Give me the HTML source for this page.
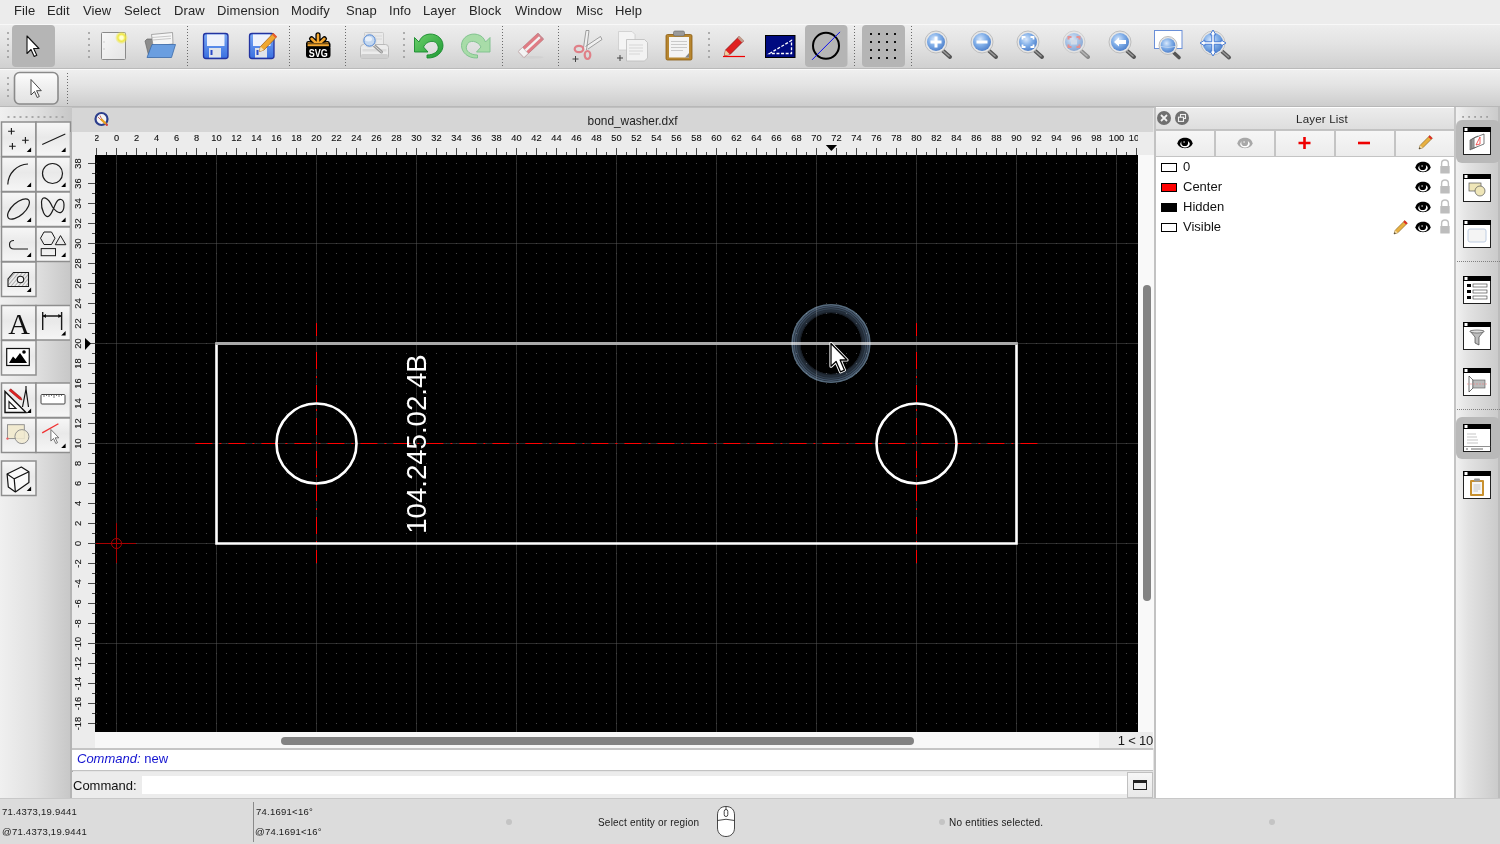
<!DOCTYPE html>
<html><head><meta charset="utf-8">
<style>
*{margin:0;padding:0;box-sizing:border-box}
html,body{width:1500px;height:844px;overflow:hidden;}
body{will-change:transform;background:#ececec;font-family:"Liberation Sans",sans-serif;color:#222}
.a{position:absolute}
#menu{left:0;top:0;width:1500px;height:24px;background:#ececec}
#menu span{position:absolute;top:2.6px;font-size:13px;color:#262626;letter-spacing:0.1px}
#tb1{left:0;top:24px;width:1500px;height:45px;background:linear-gradient(#ededed,#e4e4e4 40%,#d0d0d0);border-top:1px solid #f8f8f8;border-bottom:1px solid #bababa}
#tb2{left:0;top:69px;width:1500px;height:38px;background:linear-gradient(#efefef,#e4e4e4 40%,#cdcdcd);border-top:1px solid #fafafa;border-bottom:1px solid #b8b8b8}
.grip{position:absolute;width:2px;border-left:2px dotted #9a9a9a}
.sep{position:absolute;width:1px;border-left:1px dotted #707070}
.hl{position:absolute;background:#b5b5b5;border-radius:4px}
#leftdock{left:0;top:107px;width:72px;height:691px;background:linear-gradient(90deg,#f0f0f0,#e0e0e0 50%,#c6c6c6)}
.tbtn{position:absolute;width:35px;height:35px;border:1px solid #a3a3a3;background:linear-gradient(#fbfbfb,#ececec 60%,#e2e2e2)}
#doc{left:72px;top:107px;width:1083px;height:691px;background:#e4e4e4;border-left:1px solid #a8a8a8}
#title{left:72px;top:107px;width:1081px;height:25px;background:#d6d6d6}
#hruler{left:72px;top:132px;width:1082px;height:23px;background:#ececec}
#vruler{left:72px;top:155px;width:23px;height:593px;background:#ececec}
#canvas{left:95px;top:155px;width:1043px;height:577px;background:#000;overflow:hidden}
#vscroll{left:1138px;top:155px;width:16px;height:593px;background:#f9f9f9}
#hscroll{left:95px;top:732px;width:1043px;height:16px;background:#f7f7f7}
#status{left:0;top:798px;width:1500px;height:46px;background:#dcdcdc;border-top:1px solid #c8c8c8}
#layer{left:1155px;top:107px;width:300px;height:691px;background:#fff;border-left:1px solid #b8b8b8}
#rightdock{left:1455px;top:107px;width:45px;height:691px;background:linear-gradient(90deg,#f2f2f2,#e2e2e2 30%,#cbcbcb 95.5%,#bcbcbc 96.5%,#bcbcbc)}
</style></head><body>
<div id="menu" class="a">
<span style="left:14px">File</span><span style="left:47px">Edit</span><span style="left:83px">View</span><span style="left:124px">Select</span><span style="left:174px">Draw</span><span style="left:217px">Dimension</span><span style="left:291px">Modify</span><span style="left:346px">Snap</span><span style="left:389px">Info</span><span style="left:423px">Layer</span><span style="left:469px">Block</span><span style="left:515px">Window</span><span style="left:576px">Misc</span><span style="left:615px">Help</span>
</div>
<div id="tb1" class="a"></div>
<div id="tb2" class="a"></div><!--TB--><svg class="a" style="left:0;top:0" width="1300" height="107" viewBox="0 0 1300 107"><rect x="12" y="25" width="43" height="42" rx="4" fill="#b5b5b5"/><rect x="805" y="25" width="42.5" height="42" rx="4" fill="#b5b5b5"/><rect x="862" y="25" width="43" height="42" rx="4" fill="#b5b5b5"/><rect x="7.2" y="32.2" width="1.6" height="1.6" fill="#8c8c8c"/><rect x="7.2" y="38.2" width="1.6" height="1.6" fill="#8c8c8c"/><rect x="7.2" y="44.2" width="1.6" height="1.6" fill="#8c8c8c"/><rect x="7.2" y="50.2" width="1.6" height="1.6" fill="#8c8c8c"/><rect x="7.2" y="56.2" width="1.6" height="1.6" fill="#8c8c8c"/><rect x="88.2" y="32.2" width="1.6" height="1.6" fill="#8c8c8c"/><rect x="88.2" y="38.2" width="1.6" height="1.6" fill="#8c8c8c"/><rect x="88.2" y="44.2" width="1.6" height="1.6" fill="#8c8c8c"/><rect x="88.2" y="50.2" width="1.6" height="1.6" fill="#8c8c8c"/><rect x="88.2" y="56.2" width="1.6" height="1.6" fill="#8c8c8c"/><rect x="403.2" y="32.2" width="1.6" height="1.6" fill="#8c8c8c"/><rect x="403.2" y="38.2" width="1.6" height="1.6" fill="#8c8c8c"/><rect x="403.2" y="44.2" width="1.6" height="1.6" fill="#8c8c8c"/><rect x="403.2" y="50.2" width="1.6" height="1.6" fill="#8c8c8c"/><rect x="403.2" y="56.2" width="1.6" height="1.6" fill="#8c8c8c"/><rect x="708.2" y="32.2" width="1.6" height="1.6" fill="#8c8c8c"/><rect x="708.2" y="38.2" width="1.6" height="1.6" fill="#8c8c8c"/><rect x="708.2" y="44.2" width="1.6" height="1.6" fill="#8c8c8c"/><rect x="708.2" y="50.2" width="1.6" height="1.6" fill="#8c8c8c"/><rect x="708.2" y="56.2" width="1.6" height="1.6" fill="#8c8c8c"/><path d="M187.5 26V66" stroke="#6a6a6a" stroke-width="1" stroke-dasharray="1 2"/><path d="M289.5 26V66" stroke="#6a6a6a" stroke-width="1" stroke-dasharray="1 2"/><path d="M345.5 26V66" stroke="#6a6a6a" stroke-width="1" stroke-dasharray="1 2"/><path d="M502.5 26V66" stroke="#6a6a6a" stroke-width="1" stroke-dasharray="1 2"/><path d="M558.5 26V66" stroke="#6a6a6a" stroke-width="1" stroke-dasharray="1 2"/><path d="M854.5 26V66" stroke="#6a6a6a" stroke-width="1" stroke-dasharray="1 2"/><path d="M911.5 26V66" stroke="#6a6a6a" stroke-width="1" stroke-dasharray="1 2"/><path d="M27 36V53.5L31 49.5L34.2 56.5L36.8 55.3L33.6 48.5H39Z" fill="#fff" stroke="#111" stroke-width="1.1" stroke-linejoin="round"/><defs><radialGradient id="glow"><stop offset="0.25" stop-color="#ffffd0"/><stop offset="0.55" stop-color="#f0e840"/><stop offset="1" stop-color="#f0e840" stop-opacity="0"/></radialGradient><linearGradient id="page" x1="0" y1="0" x2="1" y2="1"><stop offset="0" stop-color="#f8f8f8"/><stop offset="1" stop-color="#e4e4e4"/></linearGradient><linearGradient id="flop" x1="0" y1="0" x2="0" y2="1"><stop offset="0" stop-color="#7aa8f4"/><stop offset="1" stop-color="#3a70e0"/></linearGradient><radialGradient id="mag" cx="0.4" cy="0.35" r="0.7"><stop offset="0" stop-color="#d8e8fc"/><stop offset="0.5" stop-color="#80aee8"/><stop offset="1" stop-color="#4a7cc8"/></radialGradient><linearGradient id="tbgrad" x1="0" y1="0" x2="0" y2="1"><stop offset="0" stop-color="#fdfdfd"/><stop offset="0.5" stop-color="#eeeeee"/><stop offset="1" stop-color="#e2e2e2"/></linearGradient></defs><rect x="101.5" y="32.5" width="24" height="27" rx="1" fill="url(#page)" stroke="#8a8a8a" stroke-width="1"/><path d="M103.5 42H104.5M103.5 49H104.5" stroke="#aaa"/><circle cx="121.5" cy="37.7" r="6.5" fill="url(#glow)"/><path d="M145 41L147 39H156L157 41H163V56L149 57Z" fill="#8c8c8c" stroke="#666" stroke-width="0.7"/><path d="M151.5 34.5L172.5 32.5L173 44L153 46Z" fill="#f6f6f6" stroke="#888" stroke-width="0.7"/><path d="M152 37.5L171 36M152.5 40L171 38.5" stroke="#bbb" stroke-width="0.8"/><path d="M152 44.5H175.5L171.5 57.5H147Z" fill="#6a9ee0" stroke="#3a6aa8" stroke-width="0.8"/><rect x="203.5" y="33.5" width="24.5" height="25" rx="2.5" fill="url(#flop)" stroke="#2233a0" stroke-width="1.3"/><rect x="207" y="34.5" width="17.5" height="11.5" fill="#eef2fc"/><rect x="209" y="48" width="12" height="9.5" fill="#dfe3ea"/><rect x="210.5" y="50" width="2" height="5" fill="#2a4ac8"/><rect x="249.5" y="33.5" width="24.5" height="25" rx="2.5" fill="url(#flop)" stroke="#2233a0" stroke-width="1.3"/><rect x="253" y="34.5" width="17.5" height="11.5" fill="#eef2fc"/><rect x="255" y="48" width="12" height="9.5" fill="#dfe3ea"/><rect x="256.5" y="50" width="2" height="5" fill="#2a4ac8"/><path d="M259.5 51.5L260.5 46.5L273 33.5L276.5 37L264 50Z" fill="#f0a830" stroke="#a05a10" stroke-width="0.7"/><path d="M272 34.5L275.5 38L277 36.5L273.5 33Z" fill="#e85a30"/><path d="M259.5 51.5L260.5 46.5L264 50Z" fill="#f6e0b0"/><g stroke-linecap="round"><path d="M318 45L318 34.8M318 45L311.6 38.8M318 45L324.4 38.8M318 45L308.6 43.6M318 45L327.4 43.6" stroke="#000" stroke-width="5.2"/><path d="M318 45L318 34.8M318 45L311.6 38.8M318 45L324.4 38.8M318 45L308.6 43.6M318 45L327.4 43.6" stroke="#f6a830" stroke-width="2.6"/></g><rect x="306" y="45.5" width="24.5" height="12.6" rx="3" fill="#000"/><rect x="306" y="43.5" width="24.5" height="3.6" fill="#000"/><rect x="307.6" y="44.2" width="21.3" height="2" fill="#f6a830"/><text x="318.2" y="56.6" font-family="Liberation Sans" font-weight="bold" font-size="11.5" fill="#fff" text-anchor="middle" textLength="19" lengthAdjust="spacingAndGlyphs">SVG</text><rect x="364.5" y="32.5" width="19" height="14" rx="1" fill="#eaeaea" stroke="#c4c4c4" stroke-width="0.8"/><path d="M366 36H382M366 39H382" stroke="#d4d4d4" stroke-width="0.8"/><path d="M360.5 47.5Q360.5 44.5 363.5 44.5H385.5Q388.5 44.5 388.5 47.5V56Q388.5 58.5 386 58.5H363Q360.5 58.5 360.5 56Z" fill="#ececec" stroke="#b4b4b4" stroke-width="0.9"/><rect x="361" y="54" width="27" height="4.5" rx="1.5" fill="#cfcfcf"/><rect x="362.5" y="49" width="24" height="2.5" fill="#dcdcdc"/><path d="M373.5 45L381.5 52" stroke="#9a9a9a" stroke-width="3" stroke-linecap="round"/><path d="M373.5 45L381.5 52" stroke="#d8d8d8" stroke-width="1" stroke-linecap="round"/><circle cx="369.5" cy="40.5" r="6.8" fill="#f4f4f4" stroke="#d0d0d0" stroke-width="0.6"/><circle cx="369.5" cy="40.5" r="5.7" fill="#c4d8f0" stroke="#4a80d0" stroke-width="1"/><ellipse cx="368.5" cy="39" rx="3.5" ry="2.5" fill="#e8f0fa"/><defs><linearGradient id="ug" x1="0" y1="0" x2="1" y2="1"><stop offset="0" stop-color="#6cd06a"/><stop offset="1" stop-color="#1e9a34"/></linearGradient></defs><path d="M414.5 37.5 V52 H428 L423.5 47 C426 41 436 38.5 438 46 C439.5 51 434 55 427 55 L427 58 C437 58.5 443 52 443 45.5 C443 37 434 32.5 427 34.5 C423 35.5 420.5 38 419 42 Z" fill="url(#ug)" stroke="#178a2c" stroke-width="0.9" stroke-linejoin="round"/><path d="M 490 37.5 V 52 H 476.5 L 481 47 C 478.5 41 468.5 38.5 466.5 46 C 465 51 470.5 55 477.5 55 L 477.5 58 C 467.5 58.5 461.5 52 461.5 45.5 C 461.5 37 470.5 32.5 477.5 34.5 C 481.5 35.5 484 38 485.5 42 Z" fill="#a8dca8" stroke="#7cc08a" stroke-width="0.9" stroke-linejoin="round"/><ellipse cx="532" cy="57.3" rx="11.5" ry="1.4" fill="#d0d0d0" opacity="0.8"/><g transform="translate(531 45.3) rotate(-43)"><rect x="-13.5" y="-4.2" width="27" height="8.4" rx="1" fill="#e07c84" stroke="#b86a70" stroke-width="0.6"/><rect x="-8" y="-1.2" width="21.5" height="2.4" fill="#f2f2f2"/><rect x="-13.5" y="-4.2" width="5.8" height="8.4" fill="#f4f4f4" stroke="#b8b8b8" stroke-width="0.6"/><rect x="12" y="-4.2" width="1.5" height="8.4" fill="#c88890"/></g><path d="M583.5 48L586 30.5L589 30.5L586.5 50M585.5 46.5L600.5 36.5L602 39.5L588 49" fill="#f0f0f0" stroke="#8a8a8a" stroke-width="0.8"/><ellipse cx="579" cy="49" rx="4.3" ry="3.2" fill="none" stroke="#e08088" stroke-width="2.2"/><ellipse cx="587.5" cy="55" rx="2.8" ry="4" fill="none" stroke="#e08088" stroke-width="2.2"/><path d="M572.5 59H578.5M575.5 56V62" stroke="#444" stroke-width="1"/><path d="M618.5 50V31.5H632L635 34.5V50Z" fill="#f4f4f4" stroke="#ccc" stroke-width="0.8"/><path d="M626.5 61V39.5H644.5L647.5 42.5V58L644.5 61Z" fill="#f2f2f2" stroke="#bbb" stroke-width="0.8"/><path d="M629 45H643M629 48H643M629 51H643M629 54H640" stroke="#ccc" stroke-width="0.7"/><path d="M617 58H623M620 55V61" stroke="#444" stroke-width="1"/><rect x="666" y="34.5" width="26" height="25.5" rx="1.5" fill="#b78630" stroke="#8a5a10" stroke-width="0.8"/><rect x="669" y="37" width="20" height="20.5" fill="#f4f4f4"/><rect x="673.5" y="31" width="11" height="5" rx="1.5" fill="#9a9a9a" stroke="#666" stroke-width="0.6"/><path d="M671 41.5H687M671 44.5H687M671 47.5H687M671 50.5H683" stroke="#b8b8b8" stroke-width="0.7"/><path d="M689 53L685 57.5H689Z" fill="#888"/><path d="M724.5 55.5L725.5 50L739 36.5L743.5 41L730 54.5Z" fill="#e02020" stroke="#801010" stroke-width="0.7"/><path d="M737.5 38L742 42.5L744 40.5L739.5 36Z" fill="#c0a090"/><path d="M724.5 55.5L725.5 50L730 54.5Z" fill="#f0d0a0"/><path d="M723 56.5H745" stroke="#f00000" stroke-width="1.2"/><rect x="765.5" y="35.5" width="29.5" height="22" fill="#000a80" stroke="#000" stroke-width="1"/><path d="M769.5 53.5L791.5 40.5V53.5Z" fill="none" stroke="#fff" stroke-width="1.3" stroke-dasharray="3 1.6"/><circle cx="826" cy="45.85" r="13" fill="none" stroke="#000" stroke-width="2"/><path d="M812.1 59.8L840 31.9" stroke="#1010f0" stroke-width="1"/><rect x="870" y="33" width="2" height="2" fill="#111"/><rect x="870" y="41" width="2" height="2" fill="#111"/><rect x="870" y="49" width="2" height="2" fill="#111"/><rect x="870" y="57" width="2" height="2" fill="#111"/><rect x="878" y="33" width="2" height="2" fill="#111"/><rect x="878" y="41" width="2" height="2" fill="#111"/><rect x="878" y="49" width="2" height="2" fill="#111"/><rect x="878" y="57" width="2" height="2" fill="#111"/><rect x="886" y="33" width="2" height="2" fill="#111"/><rect x="886" y="41" width="2" height="2" fill="#111"/><rect x="886" y="49" width="2" height="2" fill="#111"/><rect x="886" y="57" width="2" height="2" fill="#111"/><rect x="894" y="33" width="2" height="2" fill="#111"/><rect x="894" y="41" width="2" height="2" fill="#111"/><rect x="894" y="49" width="2" height="2" fill="#111"/><rect x="894" y="57" width="2" height="2" fill="#111"/><g><path d="M941 49L950 57" stroke="#555" stroke-width="4" stroke-linecap="round"/><path d="M942 50L949 56" stroke="#9a9a9a" stroke-width="1.6" stroke-linecap="round"/><circle cx="936" cy="42" r="11" fill="#e6e6e6" stroke="#bdbdbd" stroke-width="1"/><circle cx="936" cy="42" r="9" fill="url(#mag)"/><path d="M936 36.5V47.5M930.5 42H941.5" stroke="#fff" stroke-width="3"/></g><g><path d="M987 49L996 57" stroke="#555" stroke-width="4" stroke-linecap="round"/><path d="M988 50L995 56" stroke="#9a9a9a" stroke-width="1.6" stroke-linecap="round"/><circle cx="982" cy="42" r="11" fill="#e6e6e6" stroke="#bdbdbd" stroke-width="1"/><circle cx="982" cy="42" r="9" fill="url(#mag)"/><path d="M976.5 42H987.5" stroke="#fff" stroke-width="3"/></g><g><path d="M1033 49L1042 57" stroke="#555" stroke-width="4" stroke-linecap="round"/><path d="M1034 50L1041 56" stroke="#9a9a9a" stroke-width="1.6" stroke-linecap="round"/><circle cx="1028" cy="42" r="11" fill="#e6e6e6" stroke="#bdbdbd" stroke-width="1"/><circle cx="1028" cy="42" r="9" fill="url(#mag)"/><path d="M1022.5 39.5V37H1025.5M1030.5 37H1033.5V39.5M1033.5 44.5V47H1030.5M1025.5 47H1022.5V44.5" stroke="#fff" stroke-width="1.8" fill="none"/></g><g opacity="0.6"><path d="M1079 49L1088 57" stroke="#555" stroke-width="4" stroke-linecap="round"/><path d="M1080 50L1087 56" stroke="#9a9a9a" stroke-width="1.6" stroke-linecap="round"/><circle cx="1074" cy="42" r="11" fill="#e6e6e6" stroke="#bdbdbd" stroke-width="1"/><circle cx="1074" cy="42" r="9" fill="url(#mag)"/><path d="M1068.5 39.5V37H1071.5M1076.5 37H1079.5V39.5M1079.5 44.5V47H1076.5M1071.5 47H1068.5V44.5" stroke="#e85a5a" stroke-width="2" fill="none"/><rect x="1071" y="39.5" width="6" height="5" fill="#c8d6ec"/></g><g><path d="M1125 49L1134 57" stroke="#555" stroke-width="4" stroke-linecap="round"/><path d="M1126 50L1133 56" stroke="#9a9a9a" stroke-width="1.6" stroke-linecap="round"/><circle cx="1120" cy="42" r="11" fill="#e6e6e6" stroke="#bdbdbd" stroke-width="1"/><circle cx="1120" cy="42" r="9" fill="url(#mag)"/><path d="M1114 42L1119 37.5V40H1126V44H1119V46.5Z" fill="#fff"/></g><rect x="1154.5" y="30.5" width="27.5" height="18" fill="#fff" stroke="#6a8fd8" stroke-width="1"/><path d="M1172 51L1179 57.5" stroke="#555" stroke-width="3.6" stroke-linecap="round"/><circle cx="1168" cy="45.5" r="9" fill="#e6e6e6" stroke="#bdbdbd" stroke-width="1"/><circle cx="1168" cy="45.5" r="7.3" fill="url(#mag)"/><path d="M1161 46.5Q1168 48.5 1175 46.5" stroke="#b8d0f0" stroke-width="1" fill="none"/><path d="M1221 50.5L1229 57.5" stroke="#5a5a5a" stroke-width="4" stroke-linecap="round"/><path d="M1222 51.2L1228.5 57" stroke="#9a9a9a" stroke-width="1.2" stroke-linecap="round"/><circle cx="1213" cy="43" r="12" fill="#e6e6e6" stroke="#c4c4c4"/><circle cx="1213" cy="43" r="10.3" fill="url(#mag)"/><path d="M1213 30L1215.9 34.8L1214.25 34.8L1214.25 41.75L1221.2 41.75L1221.2 40.1L1226 43L1221.2 45.9L1221.2 44.25L1214.25 44.25L1214.25 51.2L1215.9 51.2L1213 56L1210.1 51.2L1211.75 51.2L1211.75 44.25L1204.8 44.25L1204.8 45.9L1200 43L1204.8 40.1L1204.8 41.75L1211.75 41.75L1211.75 34.8L1210.1 34.8Z" fill="#fff" stroke="#3a70d0" stroke-width="0.9" stroke-linejoin="round"/><rect x="7.2" y="77.2" width="1.6" height="1.6" fill="#8c8c8c"/><rect x="7.2" y="83.2" width="1.6" height="1.6" fill="#8c8c8c"/><rect x="7.2" y="89.2" width="1.6" height="1.6" fill="#8c8c8c"/><rect x="7.2" y="95.2" width="1.6" height="1.6" fill="#8c8c8c"/><rect x="14.5" y="72.5" width="43.5" height="31.5" rx="5" fill="url(#tbgrad)" stroke="#8a8a8a" stroke-width="1.6"/><path d="M31 79.5V95L34.5 91.5L37.2 97.5L39.3 96.5L36.6 90.7H41.3Z" fill="#fff" stroke="#333" stroke-width="0.9" stroke-linejoin="round"/><path d="M67.5 73V104" stroke="#6a6a6a" stroke-width="1" stroke-dasharray="1 2"/></svg><!--/TB-->
<div id="leftdock" class="a"></div><!--LEFT--><svg class="a" style="left:0;top:107px" width="72" height="400" viewBox="0 107 72 400"><defs><linearGradient id="bg" x1="0" y1="0" x2="0" y2="1"><stop offset="0" stop-color="#f7f7f7"/><stop offset="0.45" stop-color="#e9e9e9"/><stop offset="1" stop-color="#f6f6f6"/></linearGradient></defs>
<g fill="#a8a8a8"><rect x="7.5" y="116" width="2" height="2"/><rect x="13.5" y="116" width="2" height="2"/><rect x="19.5" y="116" width="2" height="2"/><rect x="25.5" y="116" width="2" height="2"/><rect x="31.5" y="116" width="2" height="2"/><rect x="37.5" y="116" width="2" height="2"/><rect x="43.5" y="116" width="2" height="2"/><rect x="49.5" y="116" width="2" height="2"/><rect x="55.5" y="116" width="2" height="2"/><rect x="61.5" y="116" width="2" height="2"/></g><rect x="1.5" y="122" width="34.5" height="34.5" fill="url(#bg)" stroke="#8e8e8e" stroke-width="1.5"/><g transform="translate(1.5 122)"><path d="M6.6 9.2H13.2M9.9 5.9V12.5M20.6 18.3H27.2M23.9 15V21.6M7.6 24.2H14.2M10.9 20.9V27.5" stroke="#1a1a1a" fill="none" stroke-width="1.1"/></g><path d="M26.7 151.9H31.1V147.5Z" fill="#000"/><rect x="36" y="122" width="34.5" height="34.5" fill="url(#bg)" stroke="#8e8e8e" stroke-width="1.5"/><g transform="translate(36 122)"><path d="M6.2 22.5L29.3 12.1" stroke="#1a1a1a" fill="none" stroke-width="1.1"/></g><path d="M61.2 151.9H65.6V147.5Z" fill="#000"/><rect x="1.5" y="157" width="34.5" height="34.5" fill="url(#bg)" stroke="#8e8e8e" stroke-width="1.5"/><g transform="translate(1.5 157)"><path d="M6.3 27.5A21 21 0 0 1 26.5 7" stroke="#1a1a1a" fill="none" stroke-width="1.2"/></g><path d="M26.7 186.9H31.1V182.5Z" fill="#000"/><rect x="36" y="157" width="34.5" height="34.5" fill="url(#bg)" stroke="#8e8e8e" stroke-width="1.5"/><g transform="translate(36 157)"><circle cx="16.5" cy="16.5" r="10" stroke="#1a1a1a" fill="none" stroke-width="1.2"/></g><path d="M61.2 186.9H65.6V182.5Z" fill="#000"/><rect x="1.5" y="192" width="34.5" height="34.5" fill="url(#bg)" stroke="#8e8e8e" stroke-width="1.5"/><g transform="translate(1.5 192)"><ellipse cx="17" cy="17" rx="13.5" ry="6.3" transform="rotate(-42 17 17)" stroke="#1a1a1a" fill="none" stroke-width="1.2"/></g><path d="M26.7 221.9H31.1V217.5Z" fill="#000"/><rect x="36" y="192" width="34.5" height="34.5" fill="url(#bg)" stroke="#8e8e8e" stroke-width="1.5"/><g transform="translate(36 192)"><path d="M16.5 15C12 5 6 3 5.5 10C5 17 9 27 13 24C16 22 17 17 20 11C23 5 28 7 28 13C28 20 24 25 16.5 15Z" stroke="#1a1a1a" fill="none" stroke-width="1.2"/></g><path d="M61.2 221.9H65.6V217.5Z" fill="#000"/><rect x="1.5" y="227" width="34.5" height="34.5" fill="url(#bg)" stroke="#8e8e8e" stroke-width="1.5"/><g transform="translate(1.5 227)"><path d="M12.5 13.5C9 13.5 8 15 8 17.5C8 20.5 10 22 12.5 22H26.5" stroke="#1a1a1a" fill="none" stroke-width="1.1"/></g><path d="M26.7 256.9H31.1V252.5Z" fill="#000"/><rect x="36" y="227" width="34.5" height="34.5" fill="url(#bg)" stroke="#8e8e8e" stroke-width="1.5"/><g transform="translate(36 227)"><path d="M8 5H15.5L19 11.2L15.5 17.5H8L4.5 11.2Z" stroke="#1a1a1a" fill="none" stroke-width="1"/><path d="M24.5 8.6L29.8 17.7H19.3Z" stroke="#1a1a1a" fill="none" stroke-width="1"/><rect x="5.2" y="21.6" width="14.3" height="7.1" stroke="#1a1a1a" fill="none" stroke-width="1"/></g><path d="M61.2 256.9H65.6V252.5Z" fill="#000"/><rect x="1.5" y="262" width="34.5" height="34.5" fill="url(#bg)" stroke="#8e8e8e" stroke-width="1.5"/><g transform="translate(1.5 262)"><defs><pattern id="hat" width="2.8" height="2.8" patternUnits="userSpaceOnUse" patternTransform="rotate(40)"><path d="M0 0V3" stroke="#555" stroke-width="0.75"/></pattern></defs><path d="M6.5 24.5V17L12 10.5H27V24.5Z" fill="url(#hat)" stroke="#1a1a1a" stroke-width="1.1"/><circle cx="19" cy="17.5" r="3.2" fill="#f2f2f2" stroke="#1a1a1a" stroke-width="1.1"/></g><path d="M26.7 291.9H31.1V287.5Z" fill="#000"/><rect x="1.5" y="305.5" width="34.5" height="34.5" fill="url(#bg)" stroke="#8e8e8e" stroke-width="1.5"/><g transform="translate(1.5 305.5)"><text x="17.5" y="28" font-family="Liberation Serif" font-size="30" text-anchor="middle" fill="#111">A</text></g><rect x="36" y="305.5" width="34.5" height="34.5" fill="url(#bg)" stroke="#8e8e8e" stroke-width="1.5"/><g transform="translate(36 305.5)"><path d="M6.7 6.5V24.5M25.6 6.5V24.5M6.7 10.5H25.6" stroke="#1a1a1a" fill="none" stroke-width="1.4"/><path d="M6.7 10.5L10 8.5V12.5ZM25.6 10.5L22.3 8.5V12.5Z" fill="#111"/></g><path d="M61.2 335.4H65.6V331.0Z" fill="#000"/><rect x="1.5" y="340.5" width="34.5" height="34.5" fill="url(#bg)" stroke="#8e8e8e" stroke-width="1.5"/><g transform="translate(1.5 340.5)"><rect x="5.2" y="8" width="22.6" height="17" fill="#fff" stroke="#111" stroke-width="1.2"/><path d="M7.5 22.5L11.5 16L14 18.5L18.5 12.5L25.5 22.5Z" fill="#000"/><circle cx="22.5" cy="11.5" r="1.8" fill="#000"/></g><rect x="1.5" y="383" width="34.5" height="34.5" fill="url(#bg)" stroke="#8e8e8e" stroke-width="1.5"/><g transform="translate(1.5 383)"><path d="M3.5 29.5V8.5L24.5 29.5Z" fill="#fafafa" stroke="#111" stroke-width="1.4"/><path d="M7.5 25.5V18.5L14.5 25.5Z" fill="none" stroke="#111" stroke-width="1.1"/><path d="M7.5 7.5L9.2 5.8L19.5 14.5L20.5 17L17.8 16.2Z" fill="#e02020" stroke="#801010" stroke-width="0.5"/><path d="M24.5 3V6M24.5 6L21 24M24.5 6L27 24" stroke="#111" stroke-width="1.2" fill="none"/></g><path d="M26.7 412.9H31.1V408.5Z" fill="#000"/><rect x="36" y="383" width="34.5" height="34.5" fill="url(#bg)" stroke="#8e8e8e" stroke-width="1.5"/><g transform="translate(36 383)"><rect x="5" y="11.5" width="24" height="9.5" rx="1" fill="#fff" stroke="#444" stroke-width="1"/><path d="M8 11.5V14M10.5 11.5V13M13 11.5V14M15.5 11.5V13M18 11.5V15M20.5 11.5V13M23 11.5V14M25.5 11.5V13" stroke="#444" stroke-width="0.7"/></g><rect x="1.5" y="418" width="34.5" height="34.5" fill="url(#bg)" stroke="#8e8e8e" stroke-width="1.5"/><g transform="translate(1.5 418)"><rect x="6" y="6.7" width="16.8" height="13.9" fill="#f1ead0" stroke="#888" stroke-width="0.9"/><circle cx="20.4" cy="18.6" r="7" fill="#f1ead0" fill-opacity="0.85" stroke="#888" stroke-width="0.9"/><circle cx="6" cy="20.6" r="1.2" fill="#f06060"/></g><rect x="36" y="418" width="34.5" height="34.5" fill="url(#bg)" stroke="#8e8e8e" stroke-width="1.5"/><g transform="translate(36 418)"><path d="M6.2 14.9L22.4 5.7" stroke="#f03030" stroke-width="1.3"/><path d="M14.9 11.5V23L17.5 20.5L19.8 25.5L21.5 24.7L19.2 19.8H22.8Z" fill="#fff" stroke="#555" stroke-width="0.8"/></g><path d="M61.2 447.9H65.6V443.5Z" fill="#000"/><rect x="1.5" y="461" width="34.5" height="34.5" fill="url(#bg)" stroke="#8e8e8e" stroke-width="1.5"/><g transform="translate(1.5 461)"><path d="M5.6 13L19.8 6L27.4 10.8V21.5L13.9 31L6.8 26Z" fill="#fafafa" stroke="#111" stroke-width="1.2" stroke-linejoin="round"/><path d="M5.6 13L12.7 17.9L27.4 10.8M12.7 17.9L13.9 31" fill="none" stroke="#111" stroke-width="1.2"/></g><path d="M26.7 490.9H31.1V486.5Z" fill="#000"/></svg><!--/LEFT-->
<div id="doc" class="a"></div>
<div id="title" class="a"></div>
<div id="hruler" class="a"></div>
<div id="vruler" class="a"></div>
<div id="vscroll" class="a"></div>
<svg class="a" style="left:95px;top:132px" width="1043" height="23" viewBox="95 132 1043 23">
<path d="M96.5 148V155M106.5 152V155M116.5 148V155M126.5 152V155M136.5 148V155M146.5 152V155M156.5 148V155M166.5 152V155M176.5 148V155M186.5 152V155M196.5 148V155M206.5 152V155M216.5 148V155M226.5 152V155M236.5 148V155M246.5 152V155M256.5 148V155M266.5 152V155M276.5 148V155M286.5 152V155M296.5 148V155M306.5 152V155M316.5 148V155M326.5 152V155M336.5 148V155M346.5 152V155M356.5 148V155M366.5 152V155M376.5 148V155M386.5 152V155M396.5 148V155M406.5 152V155M416.5 148V155M426.5 152V155M436.5 148V155M446.5 152V155M456.5 148V155M466.5 152V155M476.5 148V155M486.5 152V155M496.5 148V155M506.5 152V155M516.5 148V155M526.5 152V155M536.5 148V155M546.5 152V155M556.5 148V155M566.5 152V155M576.5 148V155M586.5 152V155M596.5 148V155M606.5 152V155M616.5 148V155M626.5 152V155M636.5 148V155M646.5 152V155M656.5 148V155M666.5 152V155M676.5 148V155M686.5 152V155M696.5 148V155M706.5 152V155M716.5 148V155M726.5 152V155M736.5 148V155M746.5 152V155M756.5 148V155M766.5 152V155M776.5 148V155M786.5 152V155M796.5 148V155M806.5 152V155M816.5 148V155M826.5 152V155M836.5 148V155M846.5 152V155M856.5 148V155M866.5 152V155M876.5 148V155M886.5 152V155M896.5 148V155M906.5 152V155M916.5 148V155M926.5 152V155M936.5 148V155M946.5 152V155M956.5 148V155M966.5 152V155M976.5 148V155M986.5 152V155M996.5 148V155M1006.5 152V155M1016.5 148V155M1026.5 152V155M1036.5 148V155M1046.5 152V155M1056.5 148V155M1066.5 152V155M1076.5 148V155M1086.5 152V155M1096.5 148V155M1106.5 152V155M1116.5 148V155M1126.5 152V155M1136.5 148V155" stroke="#4a4a4a" stroke-width="1" shape-rendering="crispEdges"/>
<g font-family="Liberation Sans" font-size="9.8" fill="#111" stroke="#111" stroke-width="0.12" text-anchor="middle"><text transform="translate(96.5 141.2) scale(0.95 1)">2</text><text transform="translate(116.5 141.2) scale(0.95 1)">0</text><text transform="translate(136.5 141.2) scale(0.95 1)">2</text><text transform="translate(156.5 141.2) scale(0.95 1)">4</text><text transform="translate(176.5 141.2) scale(0.95 1)">6</text><text transform="translate(196.5 141.2) scale(0.95 1)">8</text><text transform="translate(216.5 141.2) scale(0.95 1)">10</text><text transform="translate(236.5 141.2) scale(0.95 1)">12</text><text transform="translate(256.5 141.2) scale(0.95 1)">14</text><text transform="translate(276.5 141.2) scale(0.95 1)">16</text><text transform="translate(296.5 141.2) scale(0.95 1)">18</text><text transform="translate(316.5 141.2) scale(0.95 1)">20</text><text transform="translate(336.5 141.2) scale(0.95 1)">22</text><text transform="translate(356.5 141.2) scale(0.95 1)">24</text><text transform="translate(376.5 141.2) scale(0.95 1)">26</text><text transform="translate(396.5 141.2) scale(0.95 1)">28</text><text transform="translate(416.5 141.2) scale(0.95 1)">30</text><text transform="translate(436.5 141.2) scale(0.95 1)">32</text><text transform="translate(456.5 141.2) scale(0.95 1)">34</text><text transform="translate(476.5 141.2) scale(0.95 1)">36</text><text transform="translate(496.5 141.2) scale(0.95 1)">38</text><text transform="translate(516.5 141.2) scale(0.95 1)">40</text><text transform="translate(536.5 141.2) scale(0.95 1)">42</text><text transform="translate(556.5 141.2) scale(0.95 1)">44</text><text transform="translate(576.5 141.2) scale(0.95 1)">46</text><text transform="translate(596.5 141.2) scale(0.95 1)">48</text><text transform="translate(616.5 141.2) scale(0.95 1)">50</text><text transform="translate(636.5 141.2) scale(0.95 1)">52</text><text transform="translate(656.5 141.2) scale(0.95 1)">54</text><text transform="translate(676.5 141.2) scale(0.95 1)">56</text><text transform="translate(696.5 141.2) scale(0.95 1)">58</text><text transform="translate(716.5 141.2) scale(0.95 1)">60</text><text transform="translate(736.5 141.2) scale(0.95 1)">62</text><text transform="translate(756.5 141.2) scale(0.95 1)">64</text><text transform="translate(776.5 141.2) scale(0.95 1)">66</text><text transform="translate(796.5 141.2) scale(0.95 1)">68</text><text transform="translate(816.5 141.2) scale(0.95 1)">70</text><text transform="translate(836.5 141.2) scale(0.95 1)">72</text><text transform="translate(856.5 141.2) scale(0.95 1)">74</text><text transform="translate(876.5 141.2) scale(0.95 1)">76</text><text transform="translate(896.5 141.2) scale(0.95 1)">78</text><text transform="translate(916.5 141.2) scale(0.95 1)">80</text><text transform="translate(936.5 141.2) scale(0.95 1)">82</text><text transform="translate(956.5 141.2) scale(0.95 1)">84</text><text transform="translate(976.5 141.2) scale(0.95 1)">86</text><text transform="translate(996.5 141.2) scale(0.95 1)">88</text><text transform="translate(1016.5 141.2) scale(0.95 1)">90</text><text transform="translate(1036.5 141.2) scale(0.95 1)">92</text><text transform="translate(1056.5 141.2) scale(0.95 1)">94</text><text transform="translate(1076.5 141.2) scale(0.95 1)">96</text><text transform="translate(1096.5 141.2) scale(0.95 1)">98</text><text transform="translate(1116.5 141.2) scale(0.95 1)">100</text><text transform="translate(1136.5 141.2) scale(0.95 1)">102</text></g>
<path d="M825.8 145H837L831.4 151Z" fill="#000"/>
</svg>
<svg class="a" style="left:72px;top:155px" width="23" height="577" viewBox="72 155 23 577">
<path d="M88 723.5H95M92 713.5H95M88 703.5H95M92 693.5H95M88 683.5H95M92 673.5H95M88 663.5H95M92 653.5H95M88 643.5H95M92 633.5H95M88 623.5H95M92 613.5H95M88 603.5H95M92 593.5H95M88 583.5H95M92 573.5H95M88 563.5H95M92 553.5H95M88 543.5H95M92 533.5H95M88 523.5H95M92 513.5H95M88 503.5H95M92 493.5H95M88 483.5H95M92 473.5H95M88 463.5H95M92 453.5H95M88 443.5H95M92 433.5H95M88 423.5H95M92 413.5H95M88 403.5H95M92 393.5H95M88 383.5H95M92 373.5H95M88 363.5H95M92 353.5H95M88 343.5H95M92 333.5H95M88 323.5H95M92 313.5H95M88 303.5H95M92 293.5H95M88 283.5H95M92 273.5H95M88 263.5H95M92 253.5H95M88 243.5H95M92 233.5H95M88 223.5H95M92 213.5H95M88 203.5H95M92 193.5H95M88 183.5H95M92 173.5H95M88 163.5H95" stroke="#4a4a4a" stroke-width="1" shape-rendering="crispEdges"/>
<g font-family="Liberation Sans" font-size="9.8" fill="#111" stroke="#111" stroke-width="0.12" text-anchor="middle"><text transform="translate(81.4 723.5) rotate(-90) scale(0.95 1)">-18</text><text transform="translate(81.4 703.5) rotate(-90) scale(0.95 1)">-16</text><text transform="translate(81.4 683.5) rotate(-90) scale(0.95 1)">-14</text><text transform="translate(81.4 663.5) rotate(-90) scale(0.95 1)">-12</text><text transform="translate(81.4 643.5) rotate(-90) scale(0.95 1)">-10</text><text transform="translate(81.4 623.5) rotate(-90) scale(0.95 1)">-8</text><text transform="translate(81.4 603.5) rotate(-90) scale(0.95 1)">-6</text><text transform="translate(81.4 583.5) rotate(-90) scale(0.95 1)">-4</text><text transform="translate(81.4 563.5) rotate(-90) scale(0.95 1)">-2</text><text transform="translate(81.4 543.5) rotate(-90) scale(0.95 1)">0</text><text transform="translate(81.4 523.5) rotate(-90) scale(0.95 1)">2</text><text transform="translate(81.4 503.5) rotate(-90) scale(0.95 1)">4</text><text transform="translate(81.4 483.5) rotate(-90) scale(0.95 1)">6</text><text transform="translate(81.4 463.5) rotate(-90) scale(0.95 1)">8</text><text transform="translate(81.4 443.5) rotate(-90) scale(0.95 1)">10</text><text transform="translate(81.4 423.5) rotate(-90) scale(0.95 1)">12</text><text transform="translate(81.4 403.5) rotate(-90) scale(0.95 1)">14</text><text transform="translate(81.4 383.5) rotate(-90) scale(0.95 1)">16</text><text transform="translate(81.4 363.5) rotate(-90) scale(0.95 1)">18</text><text transform="translate(81.4 343.5) rotate(-90) scale(0.95 1)">20</text><text transform="translate(81.4 323.5) rotate(-90) scale(0.95 1)">22</text><text transform="translate(81.4 303.5) rotate(-90) scale(0.95 1)">24</text><text transform="translate(81.4 283.5) rotate(-90) scale(0.95 1)">26</text><text transform="translate(81.4 263.5) rotate(-90) scale(0.95 1)">28</text><text transform="translate(81.4 243.5) rotate(-90) scale(0.95 1)">30</text><text transform="translate(81.4 223.5) rotate(-90) scale(0.95 1)">32</text><text transform="translate(81.4 203.5) rotate(-90) scale(0.95 1)">34</text><text transform="translate(81.4 183.5) rotate(-90) scale(0.95 1)">36</text><text transform="translate(81.4 163.5) rotate(-90) scale(0.95 1)">38</text></g>
<path d="M85 338V350L91 343.5Z" fill="#000"/>
</svg>
<div id="hscroll" class="a"></div>
<svg class="a" style="left:95px;top:155px" width="1043" height="577" viewBox="95 155 1043 577">
<defs><pattern id="dots" x="6" y="3" width="10" height="10" patternUnits="userSpaceOnUse"><rect x="0" y="0" width="1" height="1" fill="#444"/></pattern>
<radialGradient id="ring" cx="831" cy="343.5" r="40" gradientUnits="userSpaceOnUse"><stop offset="0.74" stop-color="#1a2028" stop-opacity="0"/><stop offset="0.8" stop-color="#2a3440"/><stop offset="0.9" stop-color="#4e5f6e"/><stop offset="0.96" stop-color="#72879a"/><stop offset="1" stop-color="#627587" stop-opacity="0.5"/></radialGradient></defs>
<rect x="95" y="155" width="1043" height="577" fill="#000"/>
<path d="M116.5 155V732M216.5 155V732M316.5 155V732M416.5 155V732M516.5 155V732M616.5 155V732M716.5 155V732M816.5 155V732M916.5 155V732M1016.5 155V732M1116.5 155V732M95 243.5H1138M95 343.5H1138M95 443.5H1138M95 543.5H1138M95 643.5H1138" stroke="#2a2a2a" stroke-width="1" fill="none" shape-rendering="crispEdges"/>
<rect x="95" y="155" width="1043" height="577" fill="url(#dots)"/>
<g stroke="#f00" stroke-width="1" fill="none" stroke-dasharray="17 7 2 7">
<path d="M195.4 443.5H1037.5"/>
<path d="M316.5 323V563" stroke-dashoffset="4"/>
<path d="M916.5 323V563" stroke-dashoffset="4"/>
</g>
<g stroke="#a80000" stroke-width="1" fill="none"><path d="M96 543.5H136M116.5 523V563"/><circle cx="116.5" cy="543.5" r="5"/></g>
<g stroke="#fff" stroke-width="2.6" fill="none">
<path d="M216.5 343.5V543.5H1016.5V343.5"/>
<circle cx="316.5" cy="443.5" r="40"/><circle cx="916.5" cy="443.5" r="40"/>
</g>
<path d="M215.2 343.5H1017.8" stroke="#aaaaaa" stroke-width="2.8"/>
<text x="0" y="0" transform="translate(426.4 533.8) rotate(-90)" font-family="Liberation Sans" font-size="28" fill="#fff" textLength="179.5" lengthAdjust="spacingAndGlyphs">104.245.02.4B</text>
<g style="mix-blend-mode:screen" fill="none"><circle cx="831" cy="343.5" r="35" stroke="#222b36" stroke-width="9"/><circle cx="831" cy="343.5" r="38.8" stroke="#566a7c" stroke-width="1.6"/><circle cx="831" cy="343.5" r="36.8" stroke="#44556a" stroke-width="1.3"/><circle cx="831" cy="343.5" r="34.8" stroke="#354454" stroke-width="1.3"/><circle cx="831" cy="343.5" r="32.8" stroke="#252f3b" stroke-width="1.2"/><circle cx="831" cy="343.5" r="31" stroke="#161c24" stroke-width="1"/></g>
<path d="M831 343.5V366.2L836.1 361.5L840.5 371.8L844.4 370.1L840.1 360H847Z" fill="none" stroke="#fff" stroke-width="3.2" stroke-linejoin="round"/>
<path d="M831 343.5V366.2L836.1 361.5L840.5 371.8L844.4 370.1L840.1 360H847Z" fill="#fff" stroke="#000" stroke-width="1.3" stroke-linejoin="round"/>
</svg>

<div class="a" style="left:72px;top:107px;width:1083px;height:1px;background:#c0c0c0"></div>
<div class="a" style="left:70px;top:132px;width:2px;height:666px;background:#b4b4b4"></div>
<div class="a" style="left:72px;top:114px;width:1081px;text-align:center;font-size:11.9px;color:#1e1e1e;padding-left:40px">bond_washer.dxf</div>
<svg class="a" style="left:93px;top:111px" width="18" height="18" viewBox="0 0 18 18"><circle cx="8.5" cy="8" r="6" fill="#f4f4f4" stroke="#2c3e8c" stroke-width="2.2"/><path d="M5 6L9 10M7 4.5L9 9" stroke="#b04040" stroke-width="0.8"/><path d="M8 8L13 13" stroke="#e8a020" stroke-width="2.4"/><circle cx="13.8" cy="13.8" r="1.2" fill="#d04040"/></svg>
<div class="a" style="left:1143px;top:285px;width:8px;height:316px;background:#828282;border-radius:4px"></div>
<div class="a" style="left:281px;top:737px;width:633px;height:8px;background:#828282;border-radius:4px"></div>
<div class="a" style="left:1099px;top:732px;width:54px;height:16px;background:#ebebeb;font-size:13px;color:#1a1a1a;text-align:right;line-height:18px;letter-spacing:-0.2px">1 &lt; 10</div>
<div class="a" style="left:72px;top:748px;width:1081px;height:2px;background:#c4c4c4"></div>
<div class="a" style="left:72px;top:750px;width:1081px;height:21px;background:#fff;border-bottom:1.5px solid #c2c2c2"></div>
<div class="a" style="left:77px;top:750px;font-size:13px;line-height:17px;color:#1414d0;font-style:italic">Command: <span style="font-style:normal">new</span></div>
<div class="a" style="left:72px;top:771.5px;width:1081px;height:26.5px;background:#ececec"></div>
<div class="a" style="left:73px;top:778px;font-size:13px;color:#111">Command:</div>
<div class="a" style="left:142px;top:776px;width:986px;height:18px;background:#fff"></div>
<div class="a" style="left:1127px;top:772px;width:26px;height:26px;background:linear-gradient(#f6f6f6,#e8e8e8);border:1px solid #c0c0c0"></div>
<div class="a" style="left:1133px;top:780px;width:14px;height:10px;border:1px solid #222;border-top:3px solid #222;background:#eee"></div>

<div id="layer" class="a"></div>

<div class="a" style="left:1155px;top:108px;width:300px;height:22px;background:linear-gradient(#ececec,#dedede);border-bottom:1px solid #c2c2c2"></div>
<div class="a" style="left:1155px;top:113px;width:300px;text-align:center;font-size:11.5px;color:#262626;padding-left:34px;letter-spacing:0.2px">Layer List</div>
<svg class="a" style="left:1155px;top:108px" width="40" height="22" viewBox="1155 108 40 22">
<circle cx="1164" cy="118" r="7" fill="#6f6f6f"/><path d="M1161 115L1167 121M1167 115L1161 121" stroke="#f0f0f0" stroke-width="1.8"/>
<circle cx="1182" cy="118" r="7" fill="#6f6f6f"/><rect x="1180.5" y="114.5" width="5" height="4" fill="none" stroke="#f0f0f0" stroke-width="1.1"/><rect x="1178.5" y="117.2" width="5" height="4.2" fill="#6f6f6f" stroke="#f0f0f0" stroke-width="1.1"/>
</svg>
<div class="a" style="left:1155px;top:130px;width:299px;height:27px;background:#c4c4c4"></div>
<div class="a" style="left:1156px;top:131px;width:58px;height:25px;background:linear-gradient(#f6f6f6,#ececec)"></div>
<div class="a" style="left:1216px;top:131px;width:58px;height:25px;background:linear-gradient(#f6f6f6,#ececec)"></div>
<div class="a" style="left:1276px;top:131px;width:58px;height:25px;background:linear-gradient(#f6f6f6,#ececec)"></div>
<div class="a" style="left:1336px;top:131px;width:58px;height:25px;background:linear-gradient(#f6f6f6,#ececec)"></div>
<div class="a" style="left:1396px;top:131px;width:58px;height:25px;background:linear-gradient(#f6f6f6,#ececec)"></div>
<svg class="a" style="left:1155px;top:130px" width="300" height="120" viewBox="1155 130 300 120">
<g transform="translate(1185 143) scale(1)"><path d="M-7.6 0.2C-6 -7 6 -7 7.6 0.2C6 6.8 -6 6.8 -7.6 0.2Z" fill="#000"/><ellipse cx="0" cy="1" rx="4.8" ry="3.5" fill="#fff"/><circle cx="-0.3" cy="-0.3" r="3.4" fill="#000"/><circle cx="-0.9" cy="-1" r="0.7" fill="#fff"/></g>
<g transform="translate(1245 143) scale(1)"><path d="M-7.6 0.2C-6 -7 6 -7 7.6 0.2C6 6.8 -6 6.8 -7.6 0.2Z" fill="#a8a8a8"/><ellipse cx="0" cy="1" rx="4.8" ry="3.5" fill="#fff"/><circle cx="-0.3" cy="-0.3" r="3.4" fill="#a8a8a8"/><circle cx="-0.9" cy="-1" r="0.7" fill="#fff"/></g>
<path d="M1304.5 137V149M1298.5 143H1310.5" stroke="#e00" stroke-width="2.6"/>
<path d="M1358 143H1370" stroke="#e00" stroke-width="2.6"/>
<g transform="translate(1418 135)"><path d="M1 14L2.2 10.2L11.8 0.6L14.4 3.2L4.8 12.8Z" fill="#e8b040" stroke="#7a5a20" stroke-width="0.6"/><path d="M10.4 2L13 4.6L14.4 3.2L11.8 0.6Z" fill="#e02828"/><path d="M1 14L2.2 10.2L4.8 12.8Z" fill="#f0d8a0"/><path d="M1 14L1.6 12.2L2.8 13.4Z" fill="#222"/></g>
<rect x="1161.5" y="163.5" width="15" height="8" fill="#fff" stroke="#000" stroke-width="1"/>
<rect x="1161.5" y="183.5" width="15" height="8" fill="#f00" stroke="#000" stroke-width="1"/>
<rect x="1161.5" y="203.5" width="15" height="8" fill="#000" stroke="#000" stroke-width="1"/>
<rect x="1161.5" y="223.5" width="15" height="8" fill="#fff" stroke="#000" stroke-width="1"/>
<g transform="translate(1423 167) scale(1)"><path d="M-7.6 0.2C-6 -7 6 -7 7.6 0.2C6 6.8 -6 6.8 -7.6 0.2Z" fill="#000"/><ellipse cx="0" cy="1" rx="4.8" ry="3.5" fill="#fff"/><circle cx="-0.3" cy="-0.3" r="3.4" fill="#000"/><circle cx="-0.9" cy="-1" r="0.7" fill="#fff"/></g><g transform="translate(1423 187) scale(1)"><path d="M-7.6 0.2C-6 -7 6 -7 7.6 0.2C6 6.8 -6 6.8 -7.6 0.2Z" fill="#000"/><ellipse cx="0" cy="1" rx="4.8" ry="3.5" fill="#fff"/><circle cx="-0.3" cy="-0.3" r="3.4" fill="#000"/><circle cx="-0.9" cy="-1" r="0.7" fill="#fff"/></g><g transform="translate(1423 207) scale(1)"><path d="M-7.6 0.2C-6 -7 6 -7 7.6 0.2C6 6.8 -6 6.8 -7.6 0.2Z" fill="#000"/><ellipse cx="0" cy="1" rx="4.8" ry="3.5" fill="#fff"/><circle cx="-0.3" cy="-0.3" r="3.4" fill="#000"/><circle cx="-0.9" cy="-1" r="0.7" fill="#fff"/></g><g transform="translate(1423 227) scale(1)"><path d="M-7.6 0.2C-6 -7 6 -7 7.6 0.2C6 6.8 -6 6.8 -7.6 0.2Z" fill="#000"/><ellipse cx="0" cy="1" rx="4.8" ry="3.5" fill="#fff"/><circle cx="-0.3" cy="-0.3" r="3.4" fill="#000"/><circle cx="-0.9" cy="-1" r="0.7" fill="#fff"/></g>
<g transform="translate(1445 167)"><path d="M-3.4 -0.5V-3.6A3.4 3.4 0 0 1 3.4 -3.6V-0.5" fill="none" stroke="#c0c0c0" stroke-width="1.4"/><rect x="-4.7" y="-1" width="9.4" height="7.6" rx="0.6" fill="#bdbdbd"/></g><g transform="translate(1445 187)"><path d="M-3.4 -0.5V-3.6A3.4 3.4 0 0 1 3.4 -3.6V-0.5" fill="none" stroke="#c0c0c0" stroke-width="1.4"/><rect x="-4.7" y="-1" width="9.4" height="7.6" rx="0.6" fill="#bdbdbd"/></g><g transform="translate(1445 207)"><path d="M-3.4 -0.5V-3.6A3.4 3.4 0 0 1 3.4 -3.6V-0.5" fill="none" stroke="#c0c0c0" stroke-width="1.4"/><rect x="-4.7" y="-1" width="9.4" height="7.6" rx="0.6" fill="#bdbdbd"/></g><g transform="translate(1445 227)"><path d="M-3.4 -0.5V-3.6A3.4 3.4 0 0 1 3.4 -3.6V-0.5" fill="none" stroke="#c0c0c0" stroke-width="1.4"/><rect x="-4.7" y="-1" width="9.4" height="7.6" rx="0.6" fill="#bdbdbd"/></g>
<g transform="translate(1393 220)"><path d="M1 14L2.2 10.2L11.8 0.6L14.4 3.2L4.8 12.8Z" fill="#e8b040" stroke="#7a5a20" stroke-width="0.6"/><path d="M10.4 2L13 4.6L14.4 3.2L11.8 0.6Z" fill="#e02828"/><path d="M1 14L2.2 10.2L4.8 12.8Z" fill="#f0d8a0"/><path d="M1 14L1.6 12.2L2.8 13.4Z" fill="#222"/></g>
</svg>
<div class="a" style="left:1183px;top:159px;font-size:13px;line-height:16px;color:#111">0</div>
<div class="a" style="left:1183px;top:179px;font-size:13px;line-height:16px;color:#111">Center</div>
<div class="a" style="left:1183px;top:199px;font-size:13px;line-height:16px;color:#111">Hidden</div>
<div class="a" style="left:1183px;top:219px;font-size:13px;line-height:16px;color:#111">Visible</div>
<div class="a" style="left:1154px;top:107px;width:2px;height:691px;background:#c2c2c2"></div><div id="rightdock" class="a"></div><div class="a" style="left:1454px;top:107px;width:1.5px;height:691px;background:#c4c4c4"></div>
<div class="a" style="left:1456px;top:120px;width:44px;height:43px;background:#b9b9b9;border-radius:6px"></div>
<div class="a" style="left:1456px;top:417px;width:44px;height:42px;background:#b9b9b9;border-radius:6px"></div>
<svg class="a" style="left:1455px;top:110px" width="45" height="12" viewBox="1455 110 45 12"><rect x="1462.2" y="116" width="1.8" height="1.8" fill="#a0a0a0"/><rect x="1468.2" y="116" width="1.8" height="1.8" fill="#a0a0a0"/><rect x="1474.2" y="116" width="1.8" height="1.8" fill="#a0a0a0"/><rect x="1480.2" y="116" width="1.8" height="1.8" fill="#a0a0a0"/><rect x="1486.2" y="116" width="1.8" height="1.8" fill="#a0a0a0"/></svg>
<div class="a" style="left:1457px;top:261px;width:43px;height:1px;border-top:1px dotted #808080"></div>
<div class="a" style="left:1457px;top:409px;width:43px;height:1px;border-top:1px dotted #808080"></div>
<svg class="a" style="left:1455px;top:107px" width="45" height="400" viewBox="1455 107 45 400"><g transform="translate(1463 127)"><rect x="0.5" y="0.5" width="27" height="27" fill="#fff" stroke="#222" stroke-width="1"/><rect x="0" y="0" width="28" height="5" fill="#000"/><rect x="1.5" y="1" width="3" height="3" fill="#fff"/><path d="M7 13L13 10V20L7 23Z" fill="#9a9a9a" stroke="#444" stroke-width="0.6"/><path d="M9 12L15 9V19L9 22Z" fill="#b8b8b8" stroke="#444" stroke-width="0.6"/><path d="M11 11L21 7V17L11 21Z" fill="#fff" stroke="#444" stroke-width="0.7"/><path d="M13 18L17 10L17 17Z" fill="none" stroke="#e33" stroke-width="0.8"/></g><g transform="translate(1463 174)"><rect x="0.5" y="0.5" width="27" height="27" fill="#fff" stroke="#222" stroke-width="1"/><rect x="0" y="0" width="28" height="5" fill="#000"/><rect x="1.5" y="1" width="3" height="3" fill="#fff"/><rect x="6" y="9" width="12" height="8" fill="#efe6b8" stroke="#555" stroke-width="0.7"/><circle cx="17" cy="17" r="5" fill="#efe6b8" stroke="#555" stroke-width="0.7"/></g><g transform="translate(1463 220)"><rect x="0.5" y="0.5" width="27" height="27" fill="#fff" stroke="#222" stroke-width="1"/><rect x="0" y="0" width="28" height="5" fill="#000"/><rect x="1.5" y="1" width="3" height="3" fill="#fff"/><rect x="5" y="9" width="18" height="13" rx="2" fill="#f4f4f4" stroke="#b8c8e0" stroke-width="0.9"/></g><g transform="translate(1463 276)"><rect x="0.5" y="0.5" width="27" height="27" fill="#fff" stroke="#222" stroke-width="1"/><rect x="0" y="0" width="28" height="5" fill="#000"/><rect x="1.5" y="1" width="3" height="3" fill="#fff"/><rect x="4" y="8" width="4" height="3" fill="#000"/><rect x="4" y="14" width="4" height="3" fill="#000"/><rect x="4" y="20" width="4" height="3" fill="#000"/><rect x="10" y="8" width="14" height="3" fill="none" stroke="#333" stroke-width="0.6"/><rect x="10" y="14" width="14" height="3" fill="none" stroke="#333" stroke-width="0.6"/><rect x="10" y="20" width="14" height="3" fill="none" stroke="#333" stroke-width="0.6"/></g><g transform="translate(1463 322)"><rect x="0.5" y="0.5" width="27" height="27" fill="#fff" stroke="#222" stroke-width="1"/><rect x="0" y="0" width="28" height="5" fill="#000"/><rect x="1.5" y="1" width="3" height="3" fill="#fff"/><path d="M7 9H21L16 15V23L12 21V15Z" fill="#bdbdbd" stroke="#444" stroke-width="0.7"/><ellipse cx="14" cy="9.5" rx="7" ry="1.5" fill="#e0e0e0" stroke="#444" stroke-width="0.6"/></g><g transform="translate(1463 368)"><rect x="0.5" y="0.5" width="27" height="27" fill="#fff" stroke="#222" stroke-width="1"/><rect x="0" y="0" width="28" height="5" fill="#000"/><rect x="1.5" y="1" width="3" height="3" fill="#fff"/><path d="M6 8L10 12V20L6 24Z" fill="#fff" stroke="#333" stroke-width="0.7"/><rect x="10" y="12" width="12" height="8" fill="#bbb" stroke="#555" stroke-width="0.6"/><path d="M4 16H25" stroke="#f08080" stroke-width="0.6" stroke-dasharray="2 1"/></g><g transform="translate(1463 424)"><rect x="0.5" y="0.5" width="27" height="27" fill="#fff" stroke="#222" stroke-width="1"/><rect x="0" y="0" width="28" height="5" fill="#000"/><rect x="1.5" y="1" width="3" height="3" fill="#fff"/><path d="M4 10H13M4 13H14M4 16H15M4 19H15" stroke="#888" stroke-width="0.5"/><path d="M0 22.5H28" stroke="#444" stroke-width="0.6"/><path d="M3 25H5M8 25H20" stroke="#444" stroke-width="0.8"/></g><g transform="translate(1463 471)"><rect x="0.5" y="0.5" width="27" height="27" fill="#fff" stroke="#222" stroke-width="1"/><rect x="0" y="0" width="28" height="5" fill="#000"/><rect x="1.5" y="1" width="3" height="3" fill="#fff"/><rect x="7" y="9" width="14" height="16" fill="#c8902e" rx="1"/><rect x="9" y="11" width="10" height="12" fill="#f6f6f6"/><rect x="11" y="7.5" width="6" height="3" rx="1" fill="#999"/><path d="M10.5 14H17.5M10.5 16H17.5M10.5 18H17.5M10.5 20H15" stroke="#aaa" stroke-width="0.6"/></g></svg>
<div id="status" class="a"></div>
<div class="a" style="left:2px;top:806px;font-size:9.5px;color:#1a1a1a;letter-spacing:0.25px">71.4373,19.9441</div>
<div class="a" style="left:2px;top:826px;font-size:9.5px;color:#1a1a1a;letter-spacing:0.25px">@71.4373,19.9441</div>
<div class="a" style="left:253px;top:802px;width:1px;height:40px;background:#8a8a8a"></div>
<div class="a" style="left:256px;top:806px;font-size:9.5px;color:#1a1a1a;letter-spacing:0.25px">74.1691&lt;16°</div>
<div class="a" style="left:255px;top:826px;font-size:9.5px;color:#1a1a1a;letter-spacing:0.25px">@74.1691&lt;16°</div>
<div class="a" style="left:506px;top:819px;width:6px;height:6px;border-radius:3px;background:#c4c4c4"></div>
<div class="a" style="left:939px;top:819px;width:6px;height:6px;border-radius:3px;background:#c4c4c4"></div>
<div class="a" style="left:1269px;top:819px;width:6px;height:6px;border-radius:3px;background:#c4c4c4"></div>
<div class="a" style="left:598px;top:816.5px;font-size:10px;color:#1a1a1a;letter-spacing:0.2px">Select entity or region</div>
<div class="a" style="left:949px;top:816.5px;font-size:10px;color:#1a1a1a;letter-spacing:0.2px">No entities selected.</div>
<svg class="a" style="left:715px;top:805px" width="22" height="33" viewBox="0 0 22 33"><path d="M11 1.5C5.5 1.5 2.5 5 2.5 10V23C2.5 28 6 31.5 11 31.5S19.5 28 19.5 23V10C19.5 5 16.5 1.5 11 1.5Z" fill="#fff" stroke="#333" stroke-width="0.9"/><path d="M2.5 15.5Q11 13 19.5 15.5M11 1.5V8" stroke="#333" stroke-width="0.9" fill="none"/><rect x="9.2" y="4.5" width="3.6" height="7" rx="1.8" fill="#fff" stroke="#333" stroke-width="0.9"/></svg>

</body></html>
